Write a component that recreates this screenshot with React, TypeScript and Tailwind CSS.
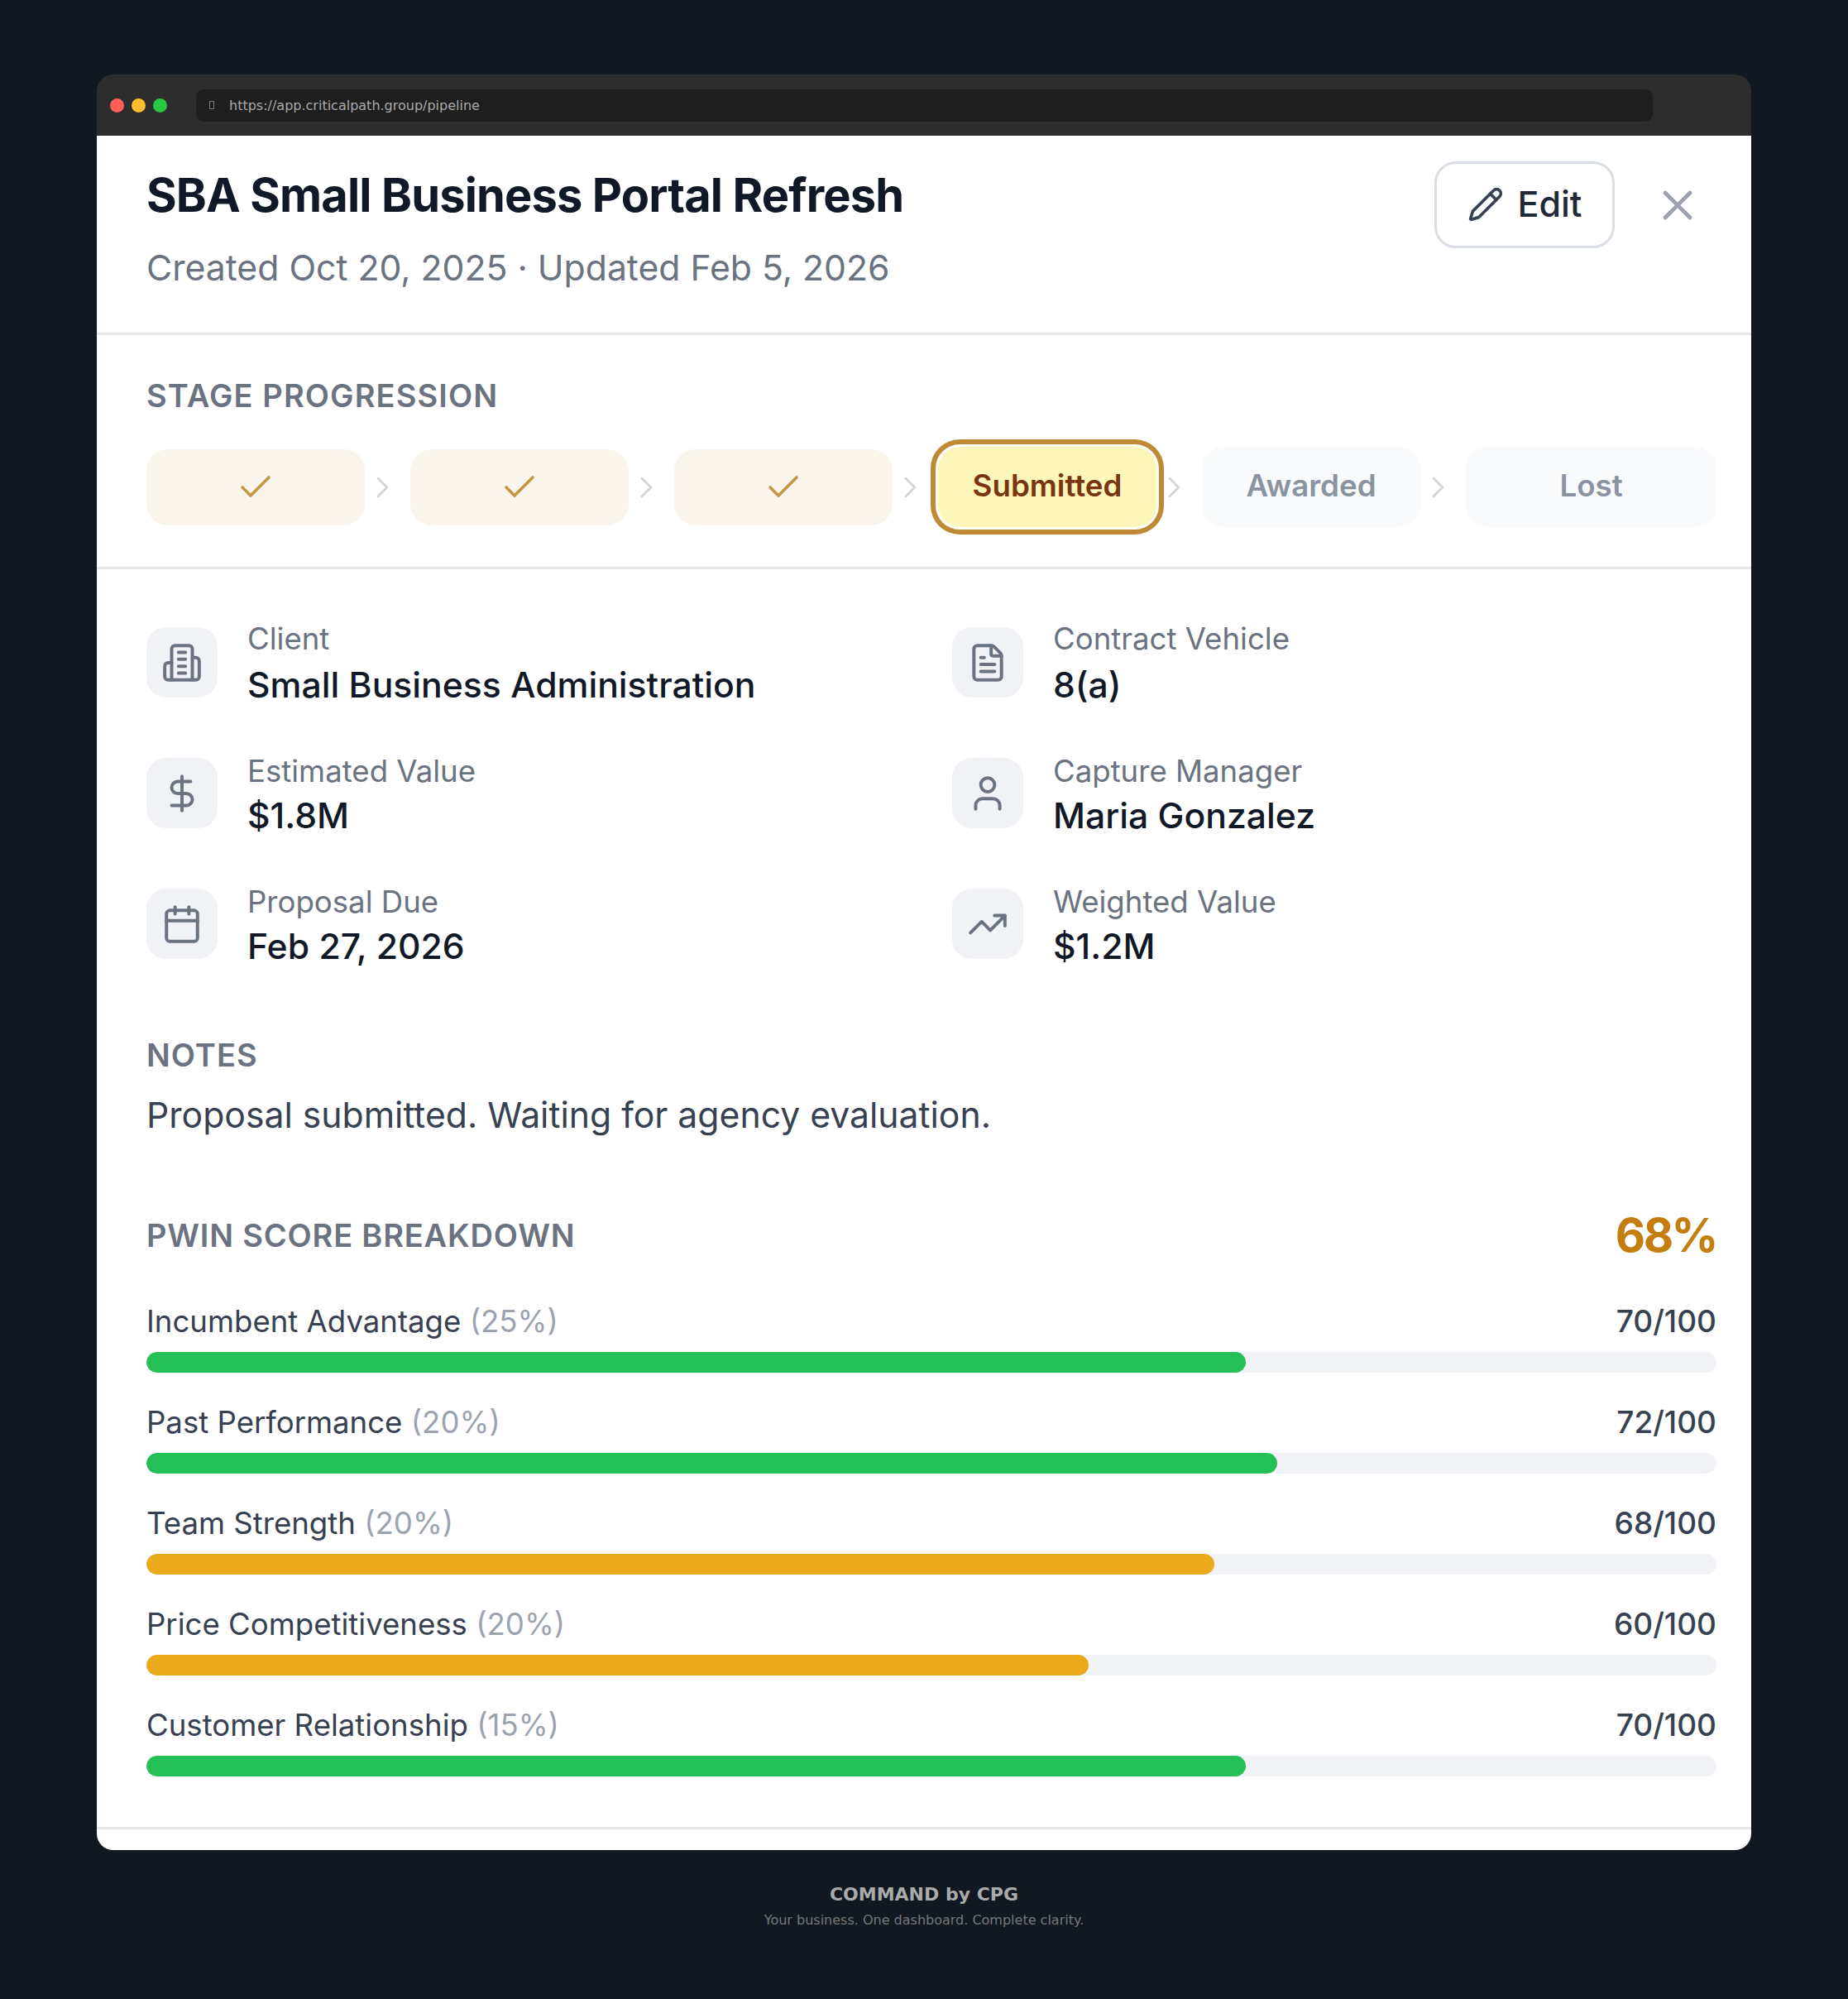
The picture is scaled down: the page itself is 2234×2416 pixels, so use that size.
import React from 'react';
import { Calendar, Check, ChevronRight, DollarSign, FileText, Pencil, TrendingUp, User, X } from 'lucide-react';

// tower with side wings, the shape in the reference
const TowerIcon = ({ size, strokeWidth, className }: { size: number; strokeWidth: number; className: string }) => (
  <svg width={size} height={size} viewBox="0 0 24 24" fill="none" stroke="currentColor" strokeWidth={strokeWidth} strokeLinecap="round" strokeLinejoin="round" className={className}>
    <path d="M6 22V4a2 2 0 0 1 2-2h8a2 2 0 0 1 2 2v18Z" />
    <path d="M6 12H4a2 2 0 0 0-2 2v6a2 2 0 0 0 2 2h2" />
    <path d="M18 9h2a2 2 0 0 1 2 2v9a2 2 0 0 1-2 2h-2" />
    <path d="M10 6h4" />
    <path d="M10 10h4" />
    <path d="M10 14h4" />
    <path d="M10 18h4" />
  </svg>
);

const info = [
  { label: 'Client', value: 'Small Business Administration', Icon: TowerIcon },
  { label: 'Contract Vehicle', value: '8(a)', Icon: FileText },
  { label: 'Estimated Value', value: '$1.8M', Icon: DollarSign },
  { label: 'Capture Manager', value: 'Maria Gonzalez', Icon: User },
  { label: 'Proposal Due', value: 'Feb 27, 2026', Icon: Calendar },
  { label: 'Weighted Value', value: '$1.2M', Icon: TrendingUp },
];

const scores = [
  { name: 'Incumbent Advantage', weight: '(25%)', score: 70, color: 'bg-[#25bf57]' },
  { name: 'Past Performance', weight: '(20%)', score: 72, color: 'bg-[#25bf57]' },
  { name: 'Team Strength', weight: '(20%)', score: 68, color: 'bg-[#e9ab1c]' },
  { name: 'Price Competitiveness', weight: '(20%)', score: 60, color: 'bg-[#e9ab1c]' },
  { name: 'Customer Relationship', weight: '(15%)', score: 70, color: 'bg-[#25bf57]' },
];

const Chevron = () => (
  <div className="w-[55px] pr-[12px] flex justify-center shrink-0">
    <ChevronRight size={48} strokeWidth={1.6} className="text-[#d1d5db]" />
  </div>
);

const DoneStep = () => (
  <div className="w-[264px] h-[92px] rounded-[26px] bg-[#f9f5ec] flex items-center justify-center shrink-0">
    <Check size={48} strokeWidth={1.8} className="text-[#c4963f]" />
  </div>
);

export default function App() {
  return (
    <div className="min-h-screen bg-[#111820] px-[117px] pt-[90px] font-['Inter',sans-serif]">
      <div className="rounded-[20px] overflow-hidden">
        <div className="h-[74px] bg-[#2d2d2d] flex items-center pl-[16px]">
          <div className="flex gap-[9px]">
            <span className="w-[17px] h-[17px] rounded-full bg-[#ff5f57]" />
            <span className="w-[17px] h-[17px] rounded-full bg-[#febc2e]" />
            <span className="w-[17px] h-[17px] rounded-full bg-[#28c840]" />
          </div>
          <div className="ml-[35px] w-[1761px] h-[39px] rounded-[9px] bg-[#1e1e1e] flex items-center pl-[16px]">
            <span className="w-[6px] h-[10px] border border-[#777777]" />
            <span className="ml-[18px] pt-[1px] text-[16px] text-[#aaaaaa] font-['DejaVu_Sans',sans-serif]">https://app.criticalpath.group/pipeline</span>
          </div>
        </div>

        <div className="bg-white h-[2072px]">
          <div className="h-[241px] border-b-[3px] border-[#e5e7eb] flex justify-between items-start pl-[60px] pr-[59px] pt-[31px]">
            <div className="pt-[3px]">
              <h1 className="text-[56px] leading-[76px] font-bold tracking-[-0.87px] text-[#111827]">SBA Small Business Portal Refresh</h1>
              <p className="mt-[20px] text-[42.7px] leading-[60px] text-[#6b7280]">Created Oct 20, 2025 · Updated Feb 5, 2026</p>
            </div>
            <div className="flex items-center gap-[46px]">
              <button className="w-[218px] h-[105px] pb-[2px] rounded-[26px] border-[3px] border-[#d9dde4] flex items-center justify-center gap-[17px] text-[43px] font-medium text-[#1f2937]">
                <Pencil size={44} strokeWidth={2} className="text-[#374151]" />
                Edit
              </button>
              <X size={60} strokeWidth={1.9} className="text-[#9ca3af]" />
            </div>
          </div>

          <div className="h-[283px] border-b-[3px] border-[#e5e7eb] pl-[60px] pr-[42px] pt-[50px]">
            <h2 className="text-[38px] leading-[46px] font-semibold tracking-[1.1px] text-[#6b7280]">STAGE PROGRESSION</h2>
            <div className="mt-[39px] flex items-center">
              <DoneStep />
              <Chevron />
              <DoneStep />
              <Chevron />
              <DoneStep />
              <Chevron />
              <div className="w-[264px] h-[97px] pb-[3px] rounded-[26px] bg-[#fef5b8] ring-[6px] ring-[#bf8a33] ring-offset-[3px] ring-offset-white flex items-center justify-center shrink-0 text-[36.7px] font-semibold text-[#78350f]">Submitted</div>
              <Chevron />
              <div className="w-[264px] h-[97px] pb-[3px] rounded-[26px] bg-[#f9fafb] flex items-center justify-center shrink-0 text-[36.7px] font-semibold text-[#8b93a1]">Awarded</div>
              <Chevron />
              <div className="flex-1 h-[97px] pb-[3px] rounded-[26px] bg-[#f9fafb] flex items-center justify-center text-[36.7px] font-semibold text-[#8b93a1]">Lost</div>
            </div>
          </div>

          <div className="pl-[60px] pr-[42px] pt-[70px]">
            <div className="grid grid-cols-[974px_1fr] gap-y-[73px]">
              {info.map(({ label, value, Icon }, idx) => (
                <div key={label} className="flex items-start gap-[36px] h-[85px]">
                  <div className="w-[86px] h-[85px] rounded-[24px] bg-[#f1f2f5] flex items-center justify-center shrink-0">
                    <Icon size={50} strokeWidth={1.9} className="text-[#6b7280]" />
                  </div>
                  <div className={idx < 2 ? '-mt-[8px]' : '-mt-[6px]'}>
                    <div className="text-[36.6px] leading-[44px] text-[#6b7280]">{label}</div>
                    <div className={`${idx < 2 ? 'mt-[8px]' : 'mt-[6px]'} text-[42.7px] leading-[52px] font-medium text-[#111827]`}>{value}</div>
                  </div>
                </div>
              ))}
            </div>

            <h2 className="mt-[93px] text-[38px] leading-[46px] font-semibold tracking-[1px] text-[#6b7280]">NOTES</h2>
            <p className="mt-[20px] text-[42.7px] leading-[60px] text-[#374151]">Proposal submitted. Waiting for agency evaluation.</p>

            <div className="mt-[80px] flex items-center justify-between h-[70px]">
              <h2 className="text-[38px] leading-[46px] font-semibold tracking-[0.8px] text-[#6b7280]">PWIN SCORE BREAKDOWN</h2>
              <span className="text-[56px] leading-[70px] font-bold tracking-[-2.5px] text-[#c47e10]">68%</span>
            </div>

            <div className="mt-[46px] flex flex-col gap-[37px]">
              {scores.map(s => (
                <div key={s.name}>
                  <div className="flex justify-between text-[36.6px] leading-[46px] text-[#374151]">
                    <span>{s.name} <span className="text-[#9ca3af]">{s.weight}</span></span>
                    <span className="text-[37px] font-medium">{s.score}/100</span>
                  </div>
                  <div className="mt-[14px] h-[25px] rounded-full bg-[#f1f2f5] overflow-hidden">
                    <div className={`h-full rounded-full ${s.color}`} style={{ width: `${s.score}%` }} />
                  </div>
                </div>
              ))}
            </div>
            <div className="mt-[61px] -ml-[60px] -mr-[42px] border-t-[3px] border-[#e5e7eb]" />
          </div>
        </div>
      </div>

      <div className="pt-[41px] pb-[60px] text-center font-['DejaVu_Sans',sans-serif]">
        <div className="text-[22px] leading-[26px] font-bold text-[#aaaaaa]">COMMAND by CPG</div>
        <div className="mt-[8px] text-[16px] leading-[20px] text-[#777777]">Your business. One dashboard. Complete clarity.</div>
      </div>
    </div>
  );
}
